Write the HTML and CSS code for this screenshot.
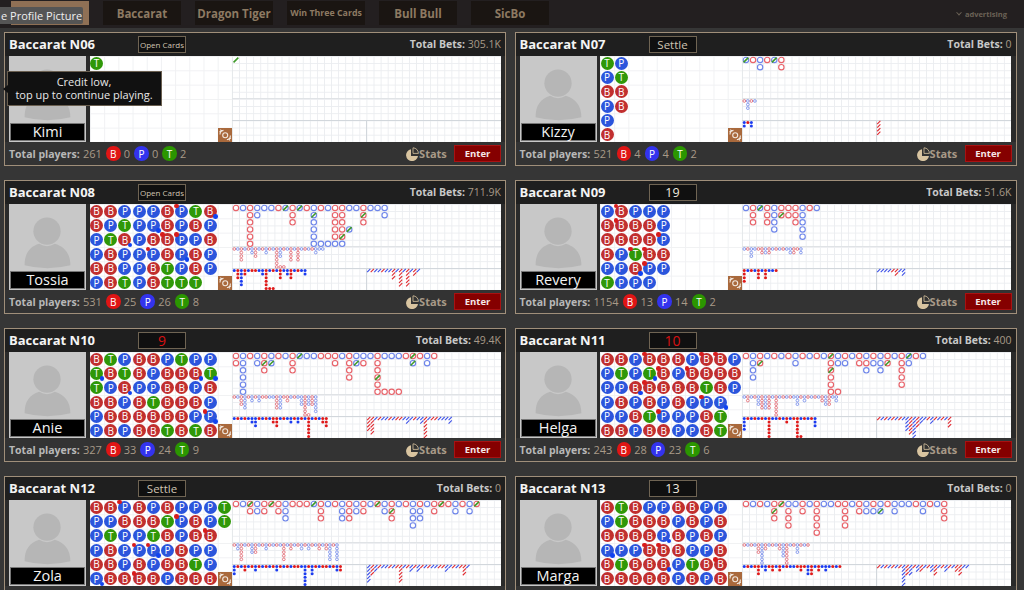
FILE: index.html
```html
<!DOCTYPE html>
<html lang="en">
<head>
<meta charset="utf-8">
<title>Baccarat lobby</title>
<link rel="stylesheet" href="styles.css">
</head>
<body>
<svg class="defs" width="0" height="0" aria-hidden="true">
  <defs>
    <symbol id="person" viewBox="0 0 77 67">
      <circle cx="38" cy="27" r="14"/>
      <path d="M15 62C15 50 20 43 30 40Q38 45 46 40C56 43 62 50 62 62Q38 68 15 62Z"/>
    </symbol>
    <symbol id="pie" viewBox="0 0 14 14">
      <path d="M6 2.2A6 6 0 1 0 13 9H6Z"/>
      <path class="pie-cut" d="M8 .8V6.4H13.4A5.6 5.6 0 0 0 8 .8Z"/>
    </symbol>
    <symbol id="swap" viewBox="0 0 14 14">
      <circle class="swap-line" cx="7.2" cy="7.2" r="2.5"/>
      <path class="swap-line" d="M2 6.5C2 4 3.2 2.6 5.5 2.4M2.4 1.6 3.6 3.2 1.4 3.8M12.4 7.5C12.4 10 11.2 11.4 8.9 11.6M12 12.4 10.8 10.8 13 10.2"/>
    </symbol>
  </defs>
</svg>
<nav class="topbar">
  <div class="tab tab-active"></div>
  <div class="tab">Baccarat</div>
  <div class="tab">Dragon Tiger</div>
  <div class="tab tab-small">Win Three Cards</div>
  <div class="tab">Bull Bull</div>
  <div class="tab">SicBo</div>
  <div class="ad"><span class="ad-chevron"></span>advertising</div>
  <div class="profile-tip">e Profile Picture</div>
</nav>
<main class="grid">
  <section class="card" data-table="N06">
    <header class="card-head"><h2 class="title">Baccarat N06</h2><div class="status status-small">Open Cards</div><div class="bets">Total Bets: <span class="dim">305.1K</span></div></header>
    <div class="card-body"><div class="avatar"><svg class="person"><use href="#person"/></svg><div class="name">Kimi</div></div><div class="board"></div></div>
    <footer class="card-foot"><span class="players">Total players:</span><span class="dim">261</span><span class="chip chip-b">B</span><span class="dim">0</span><span class="chip chip-p">P</span><span class="dim">0</span><span class="chip chip-t">T</span><span class="dim">2</span><span class="stats"><svg class="pie"><use href="#pie"/></svg>Stats</span><button class="enter">Enter</button></footer>
    <div class="credit-tip">Credit low,<br>top up to continue playing.</div>
  </section>
  <section class="card" data-table="N07">
    <header class="card-head"><h2 class="title">Baccarat N07</h2><div class="status">Settle</div><div class="bets">Total Bets: <span class="dim">0</span></div></header>
    <div class="card-body"><div class="avatar"><svg class="person"><use href="#person"/></svg><div class="name">Kizzy</div></div><div class="board"></div></div>
    <footer class="card-foot"><span class="players">Total players:</span><span class="dim">521</span><span class="chip chip-b">B</span><span class="dim">4</span><span class="chip chip-p">P</span><span class="dim">4</span><span class="chip chip-t">T</span><span class="dim">2</span><span class="stats"><svg class="pie"><use href="#pie"/></svg>Stats</span><button class="enter">Enter</button></footer>
  </section>
  <section class="card" data-table="N08">
    <header class="card-head"><h2 class="title">Baccarat N08</h2><div class="status status-small">Open Cards</div><div class="bets">Total Bets: <span class="dim">711.9K</span></div></header>
    <div class="card-body"><div class="avatar"><svg class="person"><use href="#person"/></svg><div class="name">Tossia</div></div><div class="board"></div></div>
    <footer class="card-foot"><span class="players">Total players:</span><span class="dim">531</span><span class="chip chip-b">B</span><span class="dim">25</span><span class="chip chip-p">P</span><span class="dim">26</span><span class="chip chip-t">T</span><span class="dim">8</span><span class="stats"><svg class="pie"><use href="#pie"/></svg>Stats</span><button class="enter">Enter</button></footer>
  </section>
  <section class="card" data-table="N09">
    <header class="card-head"><h2 class="title">Baccarat N09</h2><div class="status status-count">19</div><div class="bets">Total Bets: <span class="dim">51.6K</span></div></header>
    <div class="card-body"><div class="avatar"><svg class="person"><use href="#person"/></svg><div class="name">Revery</div></div><div class="board"></div></div>
    <footer class="card-foot"><span class="players">Total players:</span><span class="dim">1154</span><span class="chip chip-b">B</span><span class="dim">13</span><span class="chip chip-p">P</span><span class="dim">14</span><span class="chip chip-t">T</span><span class="dim">2</span><span class="stats"><svg class="pie"><use href="#pie"/></svg>Stats</span><button class="enter">Enter</button></footer>
  </section>
  <section class="card" data-table="N10">
    <header class="card-head"><h2 class="title">Baccarat N10</h2><div class="status status-alert">9</div><div class="bets">Total Bets: <span class="dim">49.4K</span></div></header>
    <div class="card-body"><div class="avatar"><svg class="person"><use href="#person"/></svg><div class="name">Anie</div></div><div class="board"></div></div>
    <footer class="card-foot"><span class="players">Total players:</span><span class="dim">327</span><span class="chip chip-b">B</span><span class="dim">33</span><span class="chip chip-p">P</span><span class="dim">24</span><span class="chip chip-t">T</span><span class="dim">9</span><span class="stats"><svg class="pie"><use href="#pie"/></svg>Stats</span><button class="enter">Enter</button></footer>
  </section>
  <section class="card" data-table="N11">
    <header class="card-head"><h2 class="title">Baccarat N11</h2><div class="status status-alert">10</div><div class="bets">Total Bets: <span class="dim">400</span></div></header>
    <div class="card-body"><div class="avatar"><svg class="person"><use href="#person"/></svg><div class="name">Helga</div></div><div class="board"></div></div>
    <footer class="card-foot"><span class="players">Total players:</span><span class="dim">243</span><span class="chip chip-b">B</span><span class="dim">28</span><span class="chip chip-p">P</span><span class="dim">23</span><span class="chip chip-t">T</span><span class="dim">6</span><span class="stats"><svg class="pie"><use href="#pie"/></svg>Stats</span><button class="enter">Enter</button></footer>
  </section>
  <section class="card" data-table="N12">
    <header class="card-head"><h2 class="title">Baccarat N12</h2><div class="status">Settle</div><div class="bets">Total Bets: <span class="dim">0</span></div></header>
    <div class="card-body"><div class="avatar"><svg class="person"><use href="#person"/></svg><div class="name">Zola</div></div><div class="board"></div></div>
  </section>
  <section class="card" data-table="N13">
    <header class="card-head"><h2 class="title">Baccarat N13</h2><div class="status status-count">13</div><div class="bets">Total Bets: <span class="dim">0</span></div></header>
    <div class="card-body"><div class="avatar"><svg class="person"><use href="#person"/></svg><div class="name">Marga</div></div><div class="board"></div></div>
  </section>
</main>
<script src="app.js"></script>
</body>
</html>
```
FILE: styles.css
```css
* { box-sizing: border-box; }
html, body { margin: 0; height: 590px; overflow: hidden; }
body { background: #363636; font-family: "Open Sans", "Noto Sans", sans-serif; color: #fff; }
.defs { position: absolute; }

.topbar { position: relative; display: flex; gap: 14px; height: 28px; padding: 1px 0 0 11px; background: #231f20; }
.tab { width: 78px; height: 24px; display: flex; align-items: center; justify-content: center; background: #1a1512; color: #8d7a62; font-size: 11.5px; font-weight: 700; white-space: nowrap; }
.tab-active { background: #8f7055; }
.tab-small { font-size: 8.8px; }
.ad { margin-left: auto; margin-right: 17px; display: flex; align-items: center; gap: 3px; height: 25px; font-size: 7.5px; font-weight: 700; color: #6b6256; }
.ad-chevron { width: 4px; height: 4px; border-right: 1px solid #6b6256; border-bottom: 1px solid #6b6256; transform: rotate(45deg) translate(-1px, -1px); margin-right: 1px; }
.profile-tip { position: absolute; left: 0; top: 7px; width: 83px; height: 17px; padding-left: 1px; background: #555; border-radius: 0 2px 2px 0; font-size: 11px; line-height: 17px; color: #f0f0f0; white-space: nowrap; }

.grid { display: grid; grid-template-columns: 502px 502px; column-gap: 8.5px; row-gap: 14px; padding: 4px 0 0 4px; align-items: start; }
.card { position: relative; height: 134px; border: 1.5px solid #a08f7a; background: #333; display: flex; flex-direction: column; }
.card-head { height: 23px; display: flex; align-items: center; background: #1f1f1f; padding: 0 4px 1px 4px; }
.title { width: 129px; margin: 0; font-size: 13px; font-weight: 700; color: #f4f4f4; white-space: nowrap; }
.status { width: 48px; height: 17px; display: flex; align-items: center; justify-content: center; background: #101010; border: 1px solid #6f6453; font-size: 11.5px; color: #cfc3b2; white-space: nowrap; }
.status-small { font-size: 8px; }
.status-count { font-size: 12.5px; color: #efe9df; }
.status-alert { font-size: 14px; color: #d81010; }
.bets { margin-left: auto; font-size: 10.5px; font-weight: 700; color: #c8c8c8; white-space: nowrap; }
.dim { font-weight: 400; color: #a89a88; }

.card-body { display: flex; gap: 3.5px; height: 86px; padding-left: 4px; padding-right: 4px; background: #2a2a2a; }
.avatar { width: 77px; height: 86px; background: #c8c8c8; padding: 0 1px 1px; display: flex; flex-direction: column; }
.person { width: 75px; height: 67px; fill: #b6b6b6; flex: none; }
.name { height: 18px; background: #000; border: 1px solid #777; font-size: 14.5px; line-height: 15px; text-align: center; color: #f4f4f4; }
.board { display: flex; width: 411px; height: 86px; background: #fff; }

.beads { position: relative; width: 142px; height: 86px; display: grid; grid-template-columns: repeat(10, 14.2px); grid-auto-rows: 14.33px; background-image: linear-gradient(#f0f1f3 1px, transparent 1px), linear-gradient(90deg, #f0f1f3 1px, transparent 1px); background-size: 14.2px 14.33px; }
.cell { display: flex; align-items: center; justify-content: center; }
.bead { position: relative; width: 13px; height: 13px; border-radius: 50%; display: flex; align-items: center; justify-content: center; font-size: 10px; font-weight: 400; line-height: 1; color: #fff; }
.bead-B { background: #c12f2f; }
.bead-P { background: #2b55dc; }
.bead-T { background: #2f9808; }
.pair { position: absolute; width: 4.6px; height: 4.6px; border-radius: 50%; }
.pair-r { left: -1px; top: -1px; background: #d81c1c; }
.pair-b { right: -1px; bottom: -1px; background: #1043f0; }
.swap { position: absolute; right: 0; bottom: 0; width: 14px; height: 14px; background: #a9693c; display: block; }
.swap-line { fill: none; stroke: #f2e8df; stroke-width: 1.1; }

.roads { width: 269px; height: 86px; display: block; background-image: linear-gradient(#ebedf0 1px, transparent 1px), linear-gradient(90deg, #ebedf0 1px, transparent 1px); background-size: 7.08px 7.17px; }
.major { stroke: #d2d7dc; stroke-width: 1; }
.major-soft { stroke: #e0e3e6; stroke-width: 1; }
.ring { fill: none; stroke-width: 1.15; }
.ring-r { stroke: #e8636a; }
.ring-b { stroke: #6f86ea; }
.tie { stroke: #3f9a2a; stroke-width: 1.6; }
.mini { fill: none; stroke-width: .8; }
.mini-r { stroke: #e0606a; }
.mini-b { stroke: #6f86ea; }
.dot-r { fill: #e01a1a; }
.dot-b { fill: #1c3cf0; }
.slash { stroke-width: 1.1; }
.slash-r { stroke: #e02a30; }
.slash-b { stroke: #3c50e8; }

.card-foot { flex: 1; display: flex; align-items: center; gap: 3.2px; padding: 0 4px; background: #333; font-size: 11px; }
.players { font-size: 10.5px; font-weight: 700; color: #b8b8b8; }
.chip { width: 14.5px; height: 14.5px; border-radius: 50%; display: flex; align-items: center; justify-content: center; margin-left: 1px; font-size: 10px; font-weight: 400; color: #fff; }
.chip-b { background: #e01515; }
.chip-p { background: #3333ee; }
.chip-t { background: #2b9600; }
.stats { margin-left: auto; display: flex; align-items: center; font-weight: 700; color: #a89a88; }
.pie { width: 14px; height: 14px; fill: #d8c4a0; }
.pie-cut { fill: none; stroke: #d8c4a0; stroke-width: .8; }
.enter { width: 47px; height: 17px; margin-left: 4px; padding: 0; background: #850000; border: 1px solid #a81212; font-family: inherit; font-size: 9.5px; font-weight: 700; color: #f5e8e8; }

.credit-tip { position: absolute; left: 1.5px; top: 37.5px; width: 155px; height: 35px; background: #111; border: 1px solid #6a5f50; font-size: 11px; line-height: 13px; text-align: center; padding-top: 3px; color: #e8e8e8; }
.credit-tip::before { content: ""; position: absolute; left: -5px; top: 13px; border-top: 4px solid transparent; border-bottom: 4px solid transparent; border-right: 5px solid #111; }
```
FILE: app.js
```js
var TABLES = {
  N06: { beads: ["T"], big: ["G"], eye: "", small: "", roach: "" },
  N07: {
    beads: ["TP", "PT", "BB", "PB", "P", "B"],
    big: ["BrbrBr", "..b..r"],
    eye: "r b3 r b", small: "b2 r b2", roach: "r4"
  },
  N08: {
    beads: ["BBPPPBP^TB_", "BPTPP_BPBP", "PTB_PBB^P^PB", "PBPPP^BP_BP", "BBPPBTPBP", "PBTPBTTT"],
    big: ["rbrbbbrBrBrbrbrrbbrbbb", "..rb....r..B..rr..R..b", "..r.....r..b..rr..r", "..r........b..rrB", "..r........b..rR", "..r........bbbbb"],
    eye: "r b r4 b r b2 r3 b r b2 r b r6+2 b3 r b r4 b r4 b r b r b2 b b",
    small: "b r3 b5 r2 b r r b b2 r6+2 b r b r3 b b2 r3 b r b b2",
    roach: "b r b b r b b r3 b r5 b r5 b r2 b"
  },
  N09: {
    beads: ["PB^PPP", "BB^BBP", "BBBBP^", "BPT^B^B", "PPB_P^P", "TPPP"],
    big: ["brBrbrrrbrb", ".r.rbRrrb", ".r.rb..rb", "....b...b", "........b"],
    eye: "b r b3 b r r2 b2 r2 b r b r b b2 r2 r b2",
    small: "r4 b r b r3 b r3 b b r",
    roach: "b b b b r r2 b b2"
  },
  N10: {
    beads: ["BTPBBPTPP", "T_BTBPBBB_T_", "TPB_PPBBPB", "BBPBTBBBP", "PBBBBBBPP^_", "PBPBBTBTB"],
    big: ["rbrbrbrbrBbbrrrbrbbbrbbbrRrbr", "rb.bRB..r.....r.rBr.r....B.b", ".b..r...r.......r...r", ".b..............r...R", ".b..................r", ".b..................rrrr"],
    eye: "r b r3 b4 r b2 r b2 r r b b r4 b4 r r2 b r b b3 r6+1 b3 r3 b5",
    small: "b r b r b b2 b3 r b r b r2 r3 b r b b2 r b2 r b r6 b r b r2 r3",
    roach: "r4 r5 b r b b r b r r b b2 b r b b2 r6 b r r b b b b2"
  },
  N11: {
    beads: ["BBPB^BBPB^B^P", "PTPT_B^PB^BBB", "PPB_B^BBBTBP", "PBPBPBPP^P_", "PPBTP^PPBT", "BBPBBPPBT"],
    big: ["rbrbrbrbrbrbRbrbrbrbrbrBrb", ".bR....b....rbb.rrbbR.rb", ".b..........R....b.b..r", ".b..........r.........r", "............r.........r", "............rr"],
    eye: "b r2 b r b3 r4 b4 r4 b r6 b r b r b b3 r b2 r b r b r2 b3 r3 b b2",
    small: "b4 r b r b r b r6 b b r b r2 b r r6+1 b r b r b3",
    roach: "r b r b r b r b b4 r5 b6 r3 b2 b r b2 r b r b r3"
  },
  N12: {
    beads: ["BBP^BPBPPPT", "PPBBBTP^BPT", "PTPPTBPBB^", "PBPP^P^_PBPP", "BBPBPBBTP", "P_BBB^BPBBB"],
    big: ["rbRbrRrbrrrBrbrbrbrbRbrbrbrbrRrbrbR", "..rbr.rb....r..brbr..bR..bb.r..b.b", ".......b....r..br.....r..bb", ".........................b"],
    eye: "r b2 r5 b r b3 r3 b r b2 r b r b r5 b r2 b r b2 r b2 r b r2 b r2 b5 r b5",
    small: "b3 r b r2 b r b2 r b r b r b2 r b r b r r b b6 r b3 r b r r b r b2 r2",
    roach: "b5 r3 b2 r b b r b r r5 b r b2 r b2 r b r b b r r b2 b r b r r3 b"
  },
  N13: {
    beads: ["BTBPPBBPP", "PTBBBPBPB", "BBBBP_BPBP", "P_PPB^B^BPPB", "BTBBB_PTBB^", "BBBBBPBPB"],
    big: ["rbrbrRbbrbrbbrrbrbrbrbbbrbrbr", "....R.r.r.r...r.rbbB.b...b..r", "....r.r...r...r.............r", "......r...r...r", "..........r"],
    eye: "r b r b r3 b6 r2 b r b r2 b4 r6 b r b3 r b r",
    small: "b r b r r3 b b2 r r2 b r2 b r b b r r2 r b3 r3 b r2 b b2 b r b r",
    roach: "r b r b r b r b6 r3 b3 r b2 r2 b r b2 r3 b r b2 r b r2 r3 b b"
  }
};

var SVG_NS = "http://www.w3.org/2000/svg";
var CELL_W = 7.08;
var CELL_H = 7.17;

function svgEl(name, attrs) {
  var el = document.createElementNS(SVG_NS, name);
  Object.keys(attrs).forEach(function (key) { el.setAttribute(key, attrs[key]); });
  return el;
}

function parseBeadRow(text) {
  var out = [];
  for (var i = 0; i < text.length; i++) {
    var ch = text[i];
    if (ch === "^" || ch === "_") {
      out[out.length - 1].pairs.push(ch === "^" ? "r" : "b");
    } else {
      out.push({ kind: ch, pairs: [] });
    }
  }
  return out;
}

function buildBeads(rows) {
  var wrap = document.createElement("div");
  wrap.className = "beads";
  for (var r = 0; r < 6; r++) {
    var row = parseBeadRow(rows[r] || "");
    for (var c = 0; c < 10; c++) {
      var cell = document.createElement("div");
      cell.className = "cell";
      if (row[c]) {
        var bead = document.createElement("span");
        bead.className = "bead bead-" + row[c].kind;
        bead.textContent = row[c].kind;
        row[c].pairs.forEach(function (p) {
          var dot = document.createElement("i");
          dot.className = "pair pair-" + p;
          bead.appendChild(dot);
        });
        cell.appendChild(bead);
      }
      wrap.appendChild(cell);
    }
  }
  var swap = svgEl("svg", { "class": "swap" });
  swap.appendChild(svgEl("use", { href: "#swap" }));
  wrap.appendChild(swap);
  return wrap;
}

function drawBig(svg, rows) {
  rows.forEach(function (line, r) {
    for (var c = 0; c < line.length; c++) {
      var ch = line[c];
      if (ch === ".") continue;
      var cx = (c + 0.5) * CELL_W + 0.4;
      var cy = (r + 0.5) * CELL_H + 0.4;
      if (ch !== "G") {
        var color = ch.toLowerCase();
        svg.appendChild(svgEl("circle", { "class": "ring ring-" + color, cx: cx, cy: cy, r: 2.7 }));
      }
      if (ch === "R" || ch === "B" || ch === "G") {
        svg.appendChild(svgEl("line", { "class": "tie", x1: cx - 2.4, y1: cy + 2.4, x2: cx + 2.4, y2: cy - 2.4 }));
      }
    }
  });
}

function columns(spec) {
  if (!spec) return [];
  return spec.split(" ").map(function (tok) {
    var m = tok.match(/^([rb])(\d*)(?:\+(\d+))?$/);
    return { color: m[1], height: +(m[2] || 1), tail: +(m[3] || 0) };
  });
}

function drawSmallRoad(svg, spec, x0, y0, painter) {
  var w = CELL_W / 2;
  var h = CELL_H / 2;
  columns(spec).forEach(function (col, c) {
    for (var r = 0; r < col.height; r++) {
      painter(svg, x0 + (c + 0.5) * w, y0 + (r + 0.5) * h, col.color);
    }
    for (var t = 1; t <= col.tail; t++) {
      painter(svg, x0 + (c + t + 0.5) * w, y0 + (col.height - 0.5) * h, col.color);
    }
  });
}

function paintMini(svg, x, y, color) {
  svg.appendChild(svgEl("circle", { "class": "mini mini-" + color, cx: x, cy: y, r: 1.35 }));
}
function paintDot(svg, x, y, color) {
  svg.appendChild(svgEl("circle", { "class": "dot-" + color, cx: x, cy: y, r: 1.5 }));
}
function paintSlash(svg, x, y, color) {
  svg.appendChild(svgEl("line", { "class": "slash slash-" + color, x1: x - 1.6, y1: y + 1.6, x2: x + 1.6, y2: y - 1.6 }));
}

function buildRoads(t) {
  var svg = svgEl("svg", { "class": "roads", width: 269, height: 86 });
  svg.appendChild(svgEl("line", { "class": "major-soft", x1: 0, y1: 0.5, x2: 0, y2: 86 }));
  svg.appendChild(svgEl("line", { "class": "major-soft", x1: 0, y1: 42.5, x2: 269, y2: 42.5 }));
  svg.appendChild(svgEl("line", { "class": "major", x1: 0, y1: 64.5, x2: 269, y2: 64.5 }));
  svg.appendChild(svgEl("line", { "class": "major", x1: 134.5, y1: 64.5, x2: 134.5, y2: 86 }));
  drawBig(svg, t.big);
  drawSmallRoad(svg, t.eye, 0.5, 43.2, paintMini);
  drawSmallRoad(svg, t.small, 0.5, 64.7, paintDot);
  drawSmallRoad(svg, t.roach, 135, 64.7, paintSlash);
  return svg;
}

document.querySelectorAll(".card").forEach(function (card) {
  var t = TABLES[card.getAttribute("data-table")];
  var board = card.querySelector(".board");
  board.appendChild(buildBeads(t.beads));
  board.appendChild(buildRoads(t));
});
```
